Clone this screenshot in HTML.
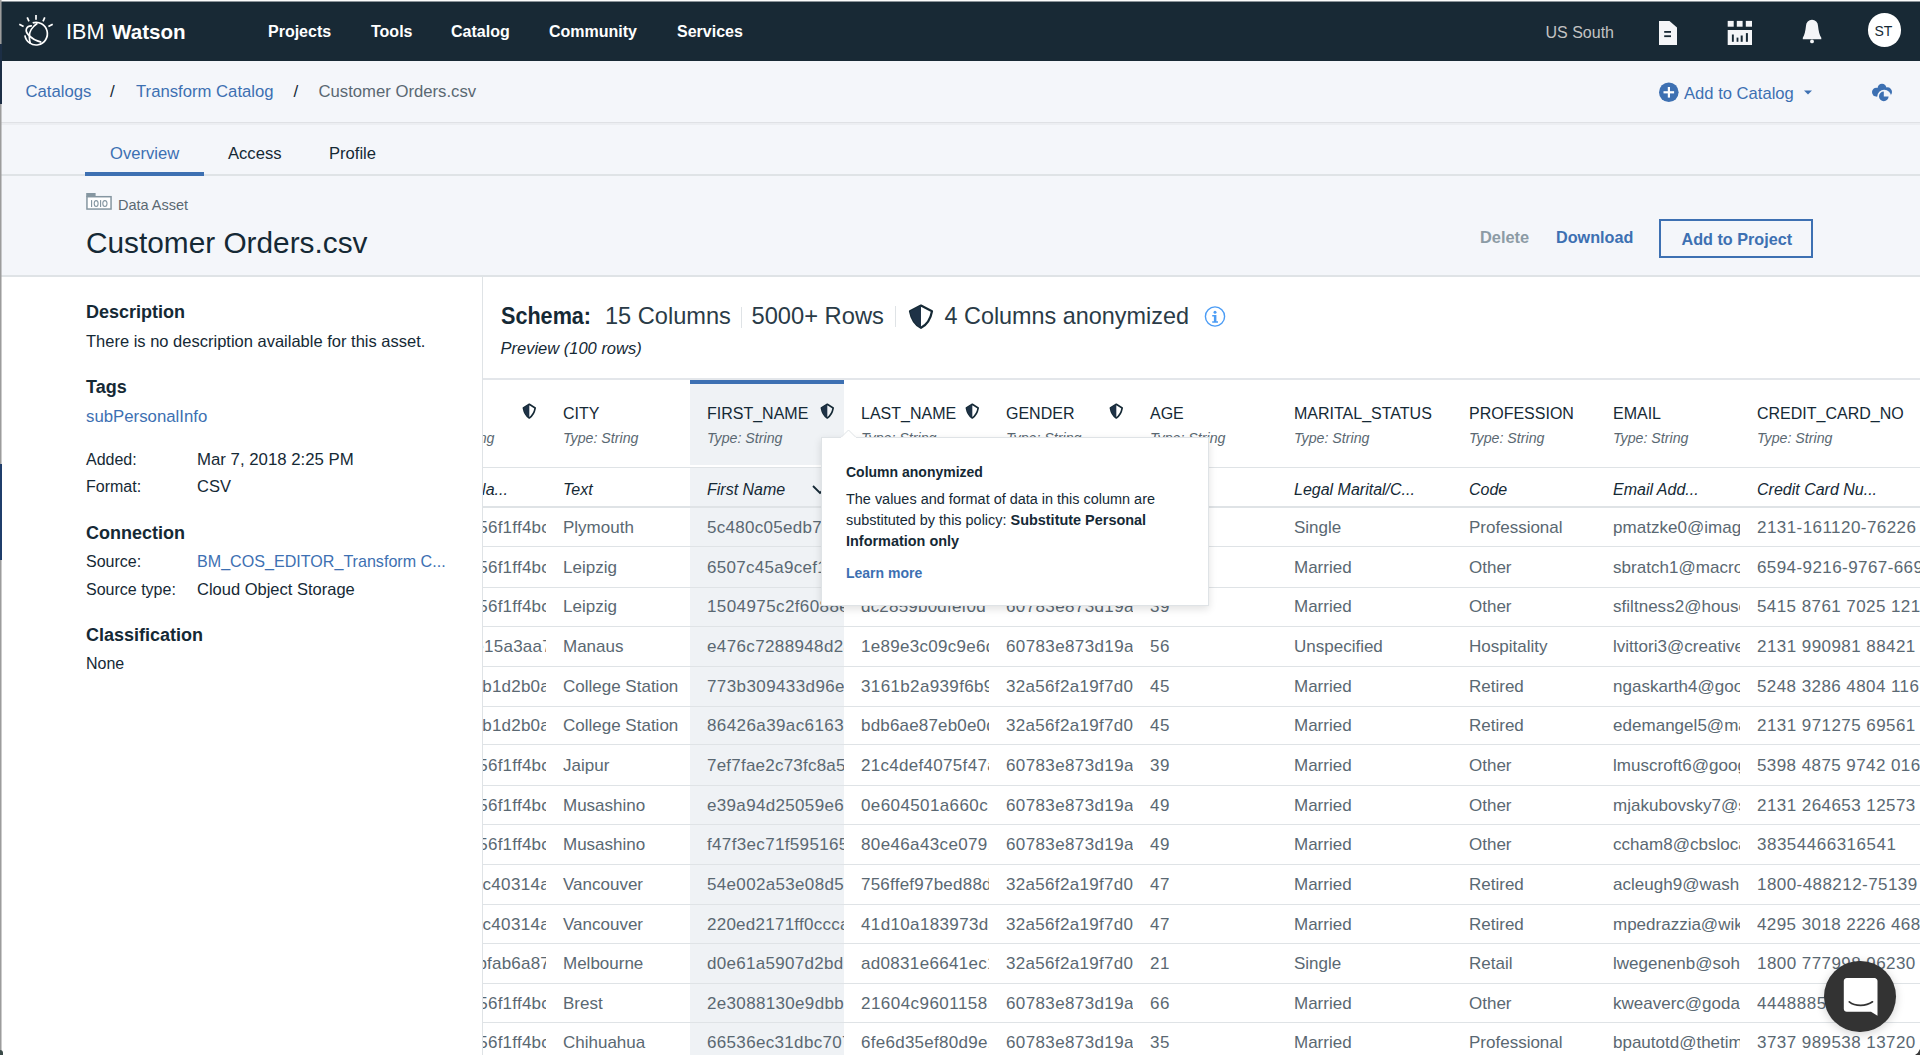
<!DOCTYPE html>
<html><head><meta charset="utf-8">
<style>
*{margin:0;padding:0;box-sizing:border-box}
html,body{width:1920px;height:1055px;overflow:hidden;background:#fff;font-family:"Liberation Sans",sans-serif;color:#152935}
.a{position:absolute;white-space:nowrap;line-height:1}
b{font-weight:bold}
</style></head><body>
<div style="position:absolute;left:0;top:0;width:1920px;height:61px;background:#182935"></div>
<svg style="position:absolute;left:15px;top:12px" width="42" height="36" viewBox="0 0 42 36">
<g stroke="#fff" stroke-width="1.7" fill="none" stroke-linecap="butt">
<line x1="21" y1="3" x2="21" y2="7.8"/>
<line x1="12.2" y1="5.3" x2="14" y2="9.4"/>
<line x1="29.8" y1="5.3" x2="28" y2="9.4"/>
<line x1="4.3" y1="12.2" x2="8.6" y2="14.6"/>
<line x1="37.7" y1="12.2" x2="33.4" y2="14.6"/>
<path d="M17.7 10.9 A11.3 11.3 0 1 1 9.9 23.3"/>
<path d="M16.9 13.9 C11.5 13.6 9.3 18.3 13.2 22.6 C16.5 26.3 21.5 29 26.3 30.1"/>
<path d="M22.4 11.2 C17.5 14.5 13.8 20 14.3 25 C14.5 28 15 30 15.3 31.6"/>
</g></svg>
<div class="a " style="left:66.0px;top:21.0px;font-size:21.6px;color:#fff">IBM</div>
<div class="a " style="left:112.0px;top:22.0px;font-size:20.6px;color:#fff;font-weight:bold">Watson</div>
<div class="a " style="left:268.0px;top:24.0px;font-size:16px;color:#fff;font-weight:bold">Projects</div>
<div class="a " style="left:371.0px;top:24.0px;font-size:16px;color:#fff;font-weight:bold">Tools</div>
<div class="a " style="left:451.0px;top:24.0px;font-size:16px;color:#fff;font-weight:bold">Catalog</div>
<div class="a " style="left:549.0px;top:24.0px;font-size:16px;color:#fff;font-weight:bold">Community</div>
<div class="a " style="left:677.0px;top:24.0px;font-size:16px;color:#fff;font-weight:bold">Services</div>
<div class="a " style="left:1545.5px;top:25.0px;font-size:16px;color:#c2c3c3">US South</div>
<svg style="position:absolute;left:1658px;top:20px" width="20" height="26" viewBox="0 0 20 26">
<path d="M1 1 H11.5 L19 7.6 V25 H1 Z" fill="#f4f5f8"/>
<rect x="6.2" y="11" width="6.8" height="1.8" fill="#182935"/>
<rect x="6.2" y="15.3" width="6.8" height="1.8" fill="#182935"/>
</svg>
<svg style="position:absolute;left:1727px;top:20px" width="26" height="26" viewBox="0 0 26 26">
<rect x="0.7" y="0.9" width="6" height="5.8" fill="#f4f5f8"/>
<rect x="9.8" y="0.9" width="5.8" height="5.8" fill="#f4f5f8"/>
<rect x="18.8" y="0.9" width="6.2" height="5.8" fill="#f4f5f8"/>
<rect x="0.7" y="10" width="24.3" height="15" fill="#f4f5f8"/>
<rect x="4.9" y="14.5" width="1.9" height="7.3" fill="#182935"/>
<rect x="9.6" y="17.6" width="1.8" height="4.2" fill="#182935"/>
<rect x="13.7" y="15.5" width="2" height="6.3" fill="#182935"/>
<rect x="18.9" y="13.1" width="2" height="8.7" fill="#182935"/>
</svg>
<svg style="position:absolute;left:1802px;top:19px" width="20" height="25" viewBox="0 0 20 25">
<path d="M4 6.8 A6 6 0 0 1 16 6.8 C16.6 12 17.4 16.4 19.3 18.8 V20.2 H0.8 V18.8 C2.6 16.4 3.4 12 4 6.8 Z" fill="#f4f5f8"/>
<circle cx="10" cy="22.4" r="1.9" fill="#f4f5f8"/>
</svg>
<div style="position:absolute;left:1867.5px;top:13.2px;width:33.4px;height:33.4px;border-radius:50%;background:#fff"></div>
<div class="a " style="left:1874.5px;top:24.0px;font-size:14px;color:#152935">ST</div>
<div style="position:absolute;left:0;top:61px;width:1920px;height:214px;background:#f4f6fa"></div>
<div style="position:absolute;left:0;top:122px;width:1920px;height:1px;background:#dfe1e5"></div>
<div style="position:absolute;left:0;top:123px;width:1920px;height:2px;background:#eceef2"></div>
<div style="position:absolute;left:0;top:174px;width:1920px;height:2px;background:#dfe3e6"></div>
<div style="position:absolute;left:0;top:275px;width:1920px;height:2px;background:#dfe3e6"></div>
<div class="a " style="left:25.5px;top:84.0px;font-size:16.7px;color:#3d70b2">Catalogs</div>
<div class="a " style="left:110.0px;top:83.0px;font-size:17px;color:#152935">/</div>
<div class="a " style="left:136.0px;top:84.0px;font-size:16.7px;color:#3d70b2">Transform Catalog</div>
<div class="a " style="left:293.5px;top:83.0px;font-size:17px;color:#152935">/</div>
<div class="a " style="left:318.5px;top:84.0px;font-size:16.7px;color:#5a6872">Customer Orders.csv</div>
<svg style="position:absolute;left:1658px;top:82px" width="22" height="22" viewBox="0 0 22 22">
<circle cx="10.8" cy="10.3" r="9.8" fill="#3d70b2"/>
<rect x="9.8" y="5" width="2.2" height="10.6" fill="#fff"/>
<rect x="5.5" y="9.2" width="10.6" height="2.2" fill="#fff"/>
</svg>
<div class="a " style="left:1684.0px;top:86.0px;font-size:16.6px;color:#3d70b2">Add to Catalog</div>
<svg style="position:absolute;left:1803px;top:89px" width="10" height="7" viewBox="0 0 10 7">
<path d="M1 1.5 H9 L5 5.5 Z" fill="#3d70b2"/></svg>
<svg style="position:absolute;left:1866px;top:78px" width="32" height="28" viewBox="0 0 32 28">
<circle cx="10.4" cy="14.1" r="4.4" fill="#3d70b2"/>
<circle cx="16" cy="10.1" r="4.4" fill="#3d70b2"/>
<circle cx="21.4" cy="13.9" r="4.6" fill="#3d70b2"/>
<rect x="10.4" y="10.5" width="11" height="8" fill="#3d70b2"/>
<circle cx="18.2" cy="18.6" r="6.9" fill="#f4f6fa"/>
<path d="M17.8 18.4 V13.6 A4.8 4.8 0 1 0 22.6 18.4 Z" fill="#3d70b2"/>
</svg>
<div class="a " style="left:110.0px;top:146.0px;font-size:16.6px;color:#3d70b2">Overview</div>
<div class="a " style="left:228.0px;top:146.0px;font-size:16.6px;color:#152935">Access</div>
<div class="a " style="left:329.0px;top:146.0px;font-size:16.6px;color:#152935">Profile</div>
<div style="position:absolute;left:85px;top:172px;width:119px;height:4px;background:#3d70b2"></div>
<svg style="position:absolute;left:82px;top:188px" width="34" height="26" viewBox="0 0 34 26">
<rect x="4.2" y="5" width="9.4" height="3.8" fill="#8596a1"/>
<rect x="4.95" y="8.7" width="24.1" height="12.35" fill="#fff" stroke="#8596a1" stroke-width="1.5"/>
<rect x="9" y="12.1" width="1.15" height="6.9" fill="#8596a1"/>
<ellipse cx="14.15" cy="15.55" rx="1.95" ry="2.95" fill="none" stroke="#8596a1" stroke-width="1.1"/>
<rect x="18" y="12.1" width="1.15" height="6.9" fill="#8596a1"/>
<ellipse cx="22.9" cy="15.55" rx="2.1" ry="2.95" fill="none" stroke="#8596a1" stroke-width="1.1"/>
</svg>
<div class="a " style="left:118.0px;top:198.0px;font-size:14.5px;color:#5a6872">Data Asset</div>
<div class="a " style="left:86.0px;top:228.0px;font-size:29.8px;color:#152935">Customer Orders.csv</div>
<div class="a " style="left:1480.0px;top:229.0px;font-size:16.4px;color:#8c9ba5;font-weight:bold">Delete</div>
<div class="a " style="left:1556.0px;top:229.0px;font-size:16.2px;color:#3d70b2;font-weight:bold">Download</div>
<div style="position:absolute;left:1659px;top:219px;width:154px;height:39px;border:2px solid #3d70b2"></div>
<div class="a " style="left:1681.5px;top:231.0px;font-size:16.2px;color:#3d70b2;font-weight:bold">Add to Project</div>
<div class="a " style="left:86.0px;top:303.0px;font-size:18px;font-weight:bold">Description</div>
<div class="a " style="left:86.0px;top:333.0px;font-size:16.5px;color:#152935">There is no description available for this asset.</div>
<div class="a " style="left:86.0px;top:378.0px;font-size:18px;font-weight:bold">Tags</div>
<div class="a " style="left:86.0px;top:409.0px;font-size:16.8px;color:#3d70b2">subPersonalInfo</div>
<div class="a " style="left:86.0px;top:452.0px;font-size:16px;">Added:</div>
<div class="a " style="left:197.0px;top:452.0px;font-size:16.8px;">Mar 7, 2018 2:25 PM</div>
<div class="a " style="left:86.0px;top:479.0px;font-size:16px;">Format:</div>
<div class="a " style="left:197.0px;top:478.0px;font-size:16.5px;">CSV</div>
<div class="a " style="left:86.0px;top:524.0px;font-size:18px;font-weight:bold">Connection</div>
<div class="a " style="left:86.0px;top:554.0px;font-size:16px;">Source:</div>
<div class="a " style="left:197.0px;top:553.0px;font-size:16.1px;color:#3d70b2">BM_COS_EDITOR_Transform C...</div>
<div class="a " style="left:86.0px;top:582.0px;font-size:16px;">Source type:</div>
<div class="a " style="left:197.0px;top:581.0px;font-size:16.5px;">Cloud Object Storage</div>
<div class="a " style="left:86.0px;top:626.0px;font-size:18px;font-weight:bold">Classification</div>
<div class="a " style="left:86.0px;top:656.0px;font-size:16px;">None</div>
<div style="position:absolute;left:482px;top:277px;width:1px;height:778px;background:#dfe3e6"></div>
<div class="a " style="left:500.5px;top:304.0px;font-size:24px;font-weight:bold;transform:scaleX(0.9);transform-origin:0 0">Schema:</div>
<div class="a " style="left:605.0px;top:305.0px;font-size:23.6px;color:#2a3b47">15 Columns</div>
<div style="position:absolute;left:741px;top:307px;width:1px;height:21px;background:#dfe3e6"></div>
<div class="a " style="left:751.5px;top:305.0px;font-size:23.7px;color:#2a3b47">5000+ Rows</div>
<div style="position:absolute;left:895px;top:306px;width:1px;height:21px;background:#dfe3e6"></div>
<svg style="position:absolute;left:903px;top:300px" width="36" height="34" viewBox="0 0 36 34">
<path d="M18 5.6 L29 11.2 C27.6 19 24 24.6 18 27.8 C12 24.6 8.4 19 7 11.2 Z" fill="none" stroke="#152935" stroke-width="2.2" stroke-linejoin="round"/>
<path d="M18 5.6 L7 11.2 C8.4 19 12 24.6 18 27.8 Z" fill="#1e3246"/>
</svg>
<div class="a " style="left:944.5px;top:305.0px;font-size:23.4px;color:#2a3b47">4 Columns anonymized</div>
<svg style="position:absolute;left:1203px;top:305px" width="24" height="24" viewBox="0 0 24 24">
<circle cx="12" cy="11.5" r="9.6" fill="none" stroke="#4b9cf5" stroke-width="1.4"/>
<circle cx="12" cy="7.3" r="1.5" fill="#4b9cf5"/>
<path d="M9.2 10 H13.4 V16.2 H15 V17.8 H9.2 V16.2 H10.9 V11.6 H9.2 Z" fill="#4b9cf5"/>
</svg>
<div class="a " style="left:500.5px;top:340.0px;font-size:16.5px;font-style:italic">Preview (100 rows)</div>
<div style="position:absolute;left:483px;top:378px;width:1437px;height:2px;background:#e3e6ea"></div>
<div style="position:absolute;left:690px;top:380px;width:154px;height:675px;background:#eff2f5"></div>
<div style="position:absolute;left:690px;top:380px;width:154px;height:4px;background:#3d70b2"></div>
<div style="position:absolute;left:690px;top:465px;width:154px;height:2px;background:#fff"></div>
<div style="position:absolute;left:483px;top:467px;width:1437px;height:1px;background:#dfe3e6"></div>
<div style="position:absolute;left:483px;top:506px;width:1437px;height:2px;background:#dfe3e6"></div>
<div style="position:absolute;left:483px;top:546px;width:1437px;height:1px;background:#dfe3e6"></div>
<div style="position:absolute;left:483px;top:587px;width:1437px;height:1px;background:#dfe3e6"></div>
<div style="position:absolute;left:483px;top:626px;width:1437px;height:1px;background:#dfe3e6"></div>
<div style="position:absolute;left:483px;top:666px;width:1437px;height:1px;background:#dfe3e6"></div>
<div style="position:absolute;left:483px;top:706px;width:1437px;height:1px;background:#dfe3e6"></div>
<div style="position:absolute;left:483px;top:744px;width:1437px;height:1px;background:#dfe3e6"></div>
<div style="position:absolute;left:483px;top:785px;width:1437px;height:1px;background:#dfe3e6"></div>
<div style="position:absolute;left:483px;top:824px;width:1437px;height:1px;background:#dfe3e6"></div>
<div style="position:absolute;left:483px;top:864px;width:1437px;height:1px;background:#dfe3e6"></div>
<div style="position:absolute;left:483px;top:904px;width:1437px;height:1px;background:#dfe3e6"></div>
<div style="position:absolute;left:483px;top:943px;width:1437px;height:1px;background:#dfe3e6"></div>
<div style="position:absolute;left:483px;top:983px;width:1437px;height:1px;background:#dfe3e6"></div>
<div style="position:absolute;left:483px;top:1022px;width:1437px;height:1px;background:#dfe3e6"></div>
<div style="position:absolute;left:483px;top:0;width:1437px;height:1055px;overflow:hidden"><div style="position:absolute;left:-483px;top:0;width:1920px;height:1055px">
<div style="position:absolute;left:402px;top:0;width:144px;height:1055px;overflow:hidden"><div class="a " style="left:17.0px;top:406.0px;font-size:16px;color:#152935">STATE</div>
<div class="a " style="left:17.0px;top:431.0px;font-size:14.2px;color:#5a6872;font-style:italic">Type: String</div>
<div class="a " style="left:17.0px;top:482.0px;font-size:16px;color:#152935;font-style:italic">Region Na...</div>
<svg style="position:absolute;left:120px;top:403px" width="15" height="16" viewBox="0 0 15 16">
<path d="M7.3 1.3 L13.2 5 C12.4 9.5 10.4 12.9 7.3 15 C4.2 12.9 2.2 9.5 1.4 5 Z" fill="none" stroke="#152935" stroke-width="1.6" stroke-linejoin="round"/>
<path d="M7.3 1.3 L1.4 5 C2.2 9.5 4.2 12.9 7.3 15 Z" fill="#1e3246"/></svg></div>
<div style="position:absolute;left:546px;top:0;width:144px;height:1055px;overflow:hidden"><div class="a " style="left:17.0px;top:406.0px;font-size:16px;color:#152935">CITY</div>
<div class="a " style="left:17.0px;top:431.0px;font-size:14.2px;color:#5a6872;font-style:italic">Type: String</div>
<div class="a " style="left:17.0px;top:482.0px;font-size:16px;color:#152935;font-style:italic">Text</div>
</div>
<div style="position:absolute;left:690px;top:0;width:154px;height:1055px;overflow:hidden"><div class="a " style="left:17.0px;top:406.0px;font-size:16px;color:#152935">FIRST_NAME</div>
<div class="a " style="left:17.0px;top:431.0px;font-size:14.2px;color:#5a6872;font-style:italic">Type: String</div>
<div class="a " style="left:17.0px;top:482.0px;font-size:16px;color:#152935;font-style:italic">First Name</div>
<svg style="position:absolute;left:130px;top:403px" width="15" height="16" viewBox="0 0 15 16">
<path d="M7.3 1.3 L13.2 5 C12.4 9.5 10.4 12.9 7.3 15 C4.2 12.9 2.2 9.5 1.4 5 Z" fill="none" stroke="#152935" stroke-width="1.6" stroke-linejoin="round"/>
<path d="M7.3 1.3 L1.4 5 C2.2 9.5 4.2 12.9 7.3 15 Z" fill="#1e3246"/></svg><svg style="position:absolute;left:120px;top:483px" width="20" height="14" viewBox="0 0 20 14"><path d="M3 3 L10 10 L17 3" fill="none" stroke="#152935" stroke-width="1.8"/></svg></div>
<div style="position:absolute;left:844px;top:0;width:145px;height:1055px;overflow:hidden"><div class="a " style="left:17.0px;top:406.0px;font-size:16px;color:#152935">LAST_NAME</div>
<div class="a " style="left:17.0px;top:431.0px;font-size:14.2px;color:#5a6872;font-style:italic">Type: String</div>
<svg style="position:absolute;left:121px;top:403px" width="15" height="16" viewBox="0 0 15 16">
<path d="M7.3 1.3 L13.2 5 C12.4 9.5 10.4 12.9 7.3 15 C4.2 12.9 2.2 9.5 1.4 5 Z" fill="none" stroke="#152935" stroke-width="1.6" stroke-linejoin="round"/>
<path d="M7.3 1.3 L1.4 5 C2.2 9.5 4.2 12.9 7.3 15 Z" fill="#1e3246"/></svg></div>
<div style="position:absolute;left:989px;top:0;width:144px;height:1055px;overflow:hidden"><div class="a " style="left:17.0px;top:406.0px;font-size:16px;color:#152935">GENDER</div>
<div class="a " style="left:17.0px;top:431.0px;font-size:14.2px;color:#5a6872;font-style:italic">Type: String</div>
<svg style="position:absolute;left:120px;top:403px" width="15" height="16" viewBox="0 0 15 16">
<path d="M7.3 1.3 L13.2 5 C12.4 9.5 10.4 12.9 7.3 15 C4.2 12.9 2.2 9.5 1.4 5 Z" fill="none" stroke="#152935" stroke-width="1.6" stroke-linejoin="round"/>
<path d="M7.3 1.3 L1.4 5 C2.2 9.5 4.2 12.9 7.3 15 Z" fill="#1e3246"/></svg></div>
<div style="position:absolute;left:1133px;top:0;width:144px;height:1055px;overflow:hidden"><div class="a " style="left:17.0px;top:406.0px;font-size:16px;color:#152935">AGE</div>
<div class="a " style="left:17.0px;top:431.0px;font-size:14.2px;color:#5a6872;font-style:italic">Type: String</div>
</div>
<div style="position:absolute;left:1277px;top:0;width:175px;height:1055px;overflow:hidden"><div class="a " style="left:17.0px;top:406.0px;font-size:16px;color:#152935">MARITAL_STATUS</div>
<div class="a " style="left:17.0px;top:431.0px;font-size:14.2px;color:#5a6872;font-style:italic">Type: String</div>
<div class="a " style="left:17.0px;top:482.0px;font-size:16px;color:#152935;font-style:italic">Legal Marital/C...</div>
</div>
<div style="position:absolute;left:1452px;top:0;width:144px;height:1055px;overflow:hidden"><div class="a " style="left:17.0px;top:406.0px;font-size:16px;color:#152935">PROFESSION</div>
<div class="a " style="left:17.0px;top:431.0px;font-size:14.2px;color:#5a6872;font-style:italic">Type: String</div>
<div class="a " style="left:17.0px;top:482.0px;font-size:16px;color:#152935;font-style:italic">Code</div>
</div>
<div style="position:absolute;left:1596px;top:0;width:144px;height:1055px;overflow:hidden"><div class="a " style="left:17.0px;top:406.0px;font-size:16px;color:#152935">EMAIL</div>
<div class="a " style="left:17.0px;top:431.0px;font-size:14.2px;color:#5a6872;font-style:italic">Type: String</div>
<div class="a " style="left:17.0px;top:482.0px;font-size:16px;color:#152935;font-style:italic">Email Add...</div>
</div>
<div style="position:absolute;left:1740px;top:0;width:200px;height:1055px;overflow:hidden"><div class="a " style="left:17.0px;top:406.0px;font-size:16px;color:#152935">CREDIT_CARD_NO</div>
<div class="a " style="left:17.0px;top:431.0px;font-size:14.2px;color:#5a6872;font-style:italic">Type: String</div>
<div class="a " style="left:17.0px;top:482.0px;font-size:16px;color:#152935;font-style:italic">Credit Card Nu...</div>
</div>
<div style="position:absolute;left:402px;top:0;width:144px;height:1055px;overflow:hidden"><div class="a" style="right:-4px;top:519.0px;font-size:17px;color:#5a6872;letter-spacing:0.23px">c9b356f1ff4bc</div></div>
<div style="position:absolute;left:546px;top:0;width:144px;height:1055px;overflow:hidden"><div class="a" style="left:17px;top:519.0px;font-size:17px;color:#5a6872;letter-spacing:0.00px">Plymouth</div></div>
<div style="position:absolute;left:690px;top:0;width:154px;height:1055px;overflow:hidden"><div class="a" style="left:17px;top:519.0px;font-size:17px;color:#5a6872;letter-spacing:0.28px">5c480c05edb7a1b2</div></div>
<div style="position:absolute;left:844px;top:0;width:145px;height:1055px;overflow:hidden"><div class="a" style="left:17px;top:519.0px;font-size:17px;color:#5a6872;letter-spacing:0.25px">b7d3e2c1f0a9</div></div>
<div style="position:absolute;left:989px;top:0;width:144px;height:1055px;overflow:hidden"><div class="a" style="left:17px;top:519.0px;font-size:17px;color:#5a6872;letter-spacing:0.38px">60783e873d19a</div></div>
<div style="position:absolute;left:1133px;top:0;width:144px;height:1055px;overflow:hidden"><div class="a" style="left:17px;top:519.0px;font-size:17px;color:#5a6872;letter-spacing:0.50px">39</div></div>
<div style="position:absolute;left:1277px;top:0;width:175px;height:1055px;overflow:hidden"><div class="a" style="left:17px;top:519.0px;font-size:17px;color:#5a6872;letter-spacing:0.00px">Single</div></div>
<div style="position:absolute;left:1452px;top:0;width:144px;height:1055px;overflow:hidden"><div class="a" style="left:17px;top:519.0px;font-size:17px;color:#5a6872;letter-spacing:0.00px">Professional</div></div>
<div style="position:absolute;left:1596px;top:0;width:144px;height:1055px;overflow:hidden"><div class="a" style="left:17px;top:519.0px;font-size:17px;color:#5a6872;letter-spacing:0.03px">pmatzke0@imagelinks</div></div>
<div style="position:absolute;left:1740px;top:0;width:200px;height:1055px;overflow:hidden"><div class="a" style="left:17px;top:519.0px;font-size:17px;color:#5a6872;letter-spacing:0.44px">2131-161120-76226</div></div>
<div style="position:absolute;left:402px;top:0;width:144px;height:1055px;overflow:hidden"><div class="a" style="right:-4px;top:559.0px;font-size:17px;color:#5a6872;letter-spacing:0.23px">c9b356f1ff4bc</div></div>
<div style="position:absolute;left:546px;top:0;width:144px;height:1055px;overflow:hidden"><div class="a" style="left:17px;top:559.0px;font-size:17px;color:#5a6872;letter-spacing:0.00px">Leipzig</div></div>
<div style="position:absolute;left:690px;top:0;width:154px;height:1055px;overflow:hidden"><div class="a" style="left:17px;top:559.0px;font-size:17px;color:#5a6872;letter-spacing:0.28px">6507c45a9cef1d2e</div></div>
<div style="position:absolute;left:844px;top:0;width:145px;height:1055px;overflow:hidden"><div class="a" style="left:17px;top:559.0px;font-size:17px;color:#5a6872;letter-spacing:0.25px">a1b2c3d4e5f6</div></div>
<div style="position:absolute;left:989px;top:0;width:144px;height:1055px;overflow:hidden"><div class="a" style="left:17px;top:559.0px;font-size:17px;color:#5a6872;letter-spacing:0.38px">60783e873d19a</div></div>
<div style="position:absolute;left:1133px;top:0;width:144px;height:1055px;overflow:hidden"><div class="a" style="left:17px;top:559.0px;font-size:17px;color:#5a6872;letter-spacing:0.50px">39</div></div>
<div style="position:absolute;left:1277px;top:0;width:175px;height:1055px;overflow:hidden"><div class="a" style="left:17px;top:559.0px;font-size:17px;color:#5a6872;letter-spacing:0.00px">Married</div></div>
<div style="position:absolute;left:1452px;top:0;width:144px;height:1055px;overflow:hidden"><div class="a" style="left:17px;top:559.0px;font-size:17px;color:#5a6872;letter-spacing:0.00px">Other</div></div>
<div style="position:absolute;left:1596px;top:0;width:144px;height:1055px;overflow:hidden"><div class="a" style="left:17px;top:559.0px;font-size:17px;color:#5a6872;letter-spacing:0.03px">sbratch1@macromedia</div></div>
<div style="position:absolute;left:1740px;top:0;width:200px;height:1055px;overflow:hidden"><div class="a" style="left:17px;top:559.0px;font-size:17px;color:#5a6872;letter-spacing:0.42px">6594-9216-9767-6691</div></div>
<div style="position:absolute;left:402px;top:0;width:144px;height:1055px;overflow:hidden"><div class="a" style="right:-4px;top:598.0px;font-size:17px;color:#5a6872;letter-spacing:0.23px">c9b356f1ff4bc</div></div>
<div style="position:absolute;left:546px;top:0;width:144px;height:1055px;overflow:hidden"><div class="a" style="left:17px;top:598.0px;font-size:17px;color:#5a6872;letter-spacing:0.00px">Leipzig</div></div>
<div style="position:absolute;left:690px;top:0;width:154px;height:1055px;overflow:hidden"><div class="a" style="left:17px;top:598.0px;font-size:17px;color:#5a6872;letter-spacing:0.40px">1504975c2f6088e</div></div>
<div style="position:absolute;left:844px;top:0;width:145px;height:1055px;overflow:hidden"><div class="a" style="left:17px;top:598.0px;font-size:17px;color:#5a6872;letter-spacing:0.21px">dc2859b0dfef0d</div></div>
<div style="position:absolute;left:989px;top:0;width:144px;height:1055px;overflow:hidden"><div class="a" style="left:17px;top:598.0px;font-size:17px;color:#5a6872;letter-spacing:0.38px">60783e873d19a</div></div>
<div style="position:absolute;left:1133px;top:0;width:144px;height:1055px;overflow:hidden"><div class="a" style="left:17px;top:598.0px;font-size:17px;color:#5a6872;letter-spacing:0.50px">39</div></div>
<div style="position:absolute;left:1277px;top:0;width:175px;height:1055px;overflow:hidden"><div class="a" style="left:17px;top:598.0px;font-size:17px;color:#5a6872;letter-spacing:0.00px">Married</div></div>
<div style="position:absolute;left:1452px;top:0;width:144px;height:1055px;overflow:hidden"><div class="a" style="left:17px;top:598.0px;font-size:17px;color:#5a6872;letter-spacing:0.00px">Other</div></div>
<div style="position:absolute;left:1596px;top:0;width:144px;height:1055px;overflow:hidden"><div class="a" style="left:17px;top:598.0px;font-size:17px;color:#5a6872;letter-spacing:0.03px">sfiltness2@house.gov</div></div>
<div style="position:absolute;left:1740px;top:0;width:200px;height:1055px;overflow:hidden"><div class="a" style="left:17px;top:598.0px;font-size:17px;color:#5a6872;letter-spacing:0.42px">5415 8761 7025 1213</div></div>
<div style="position:absolute;left:402px;top:0;width:144px;height:1055px;overflow:hidden"><div class="a" style="right:-6px;top:638.0px;font-size:17px;color:#5a6872;letter-spacing:0.25px">a98de15a3aa7</div></div>
<div style="position:absolute;left:546px;top:0;width:144px;height:1055px;overflow:hidden"><div class="a" style="left:17px;top:638.0px;font-size:17px;color:#5a6872;letter-spacing:0.00px">Manaus</div></div>
<div style="position:absolute;left:690px;top:0;width:154px;height:1055px;overflow:hidden"><div class="a" style="left:17px;top:638.0px;font-size:17px;color:#5a6872;letter-spacing:0.37px">e476c7288948d2a</div></div>
<div style="position:absolute;left:844px;top:0;width:145px;height:1055px;overflow:hidden"><div class="a" style="left:17px;top:638.0px;font-size:17px;color:#5a6872;letter-spacing:0.29px">1e89e3c09c9e6d</div></div>
<div style="position:absolute;left:989px;top:0;width:144px;height:1055px;overflow:hidden"><div class="a" style="left:17px;top:638.0px;font-size:17px;color:#5a6872;letter-spacing:0.38px">60783e873d19a</div></div>
<div style="position:absolute;left:1133px;top:0;width:144px;height:1055px;overflow:hidden"><div class="a" style="left:17px;top:638.0px;font-size:17px;color:#5a6872;letter-spacing:0.50px">56</div></div>
<div style="position:absolute;left:1277px;top:0;width:175px;height:1055px;overflow:hidden"><div class="a" style="left:17px;top:638.0px;font-size:17px;color:#5a6872;letter-spacing:0.00px">Unspecified</div></div>
<div style="position:absolute;left:1452px;top:0;width:144px;height:1055px;overflow:hidden"><div class="a" style="left:17px;top:638.0px;font-size:17px;color:#5a6872;letter-spacing:0.00px">Hospitality</div></div>
<div style="position:absolute;left:1596px;top:0;width:144px;height:1055px;overflow:hidden"><div class="a" style="left:17px;top:638.0px;font-size:17px;color:#5a6872;letter-spacing:0.02px">lvittori3@creativecommons</div></div>
<div style="position:absolute;left:1740px;top:0;width:200px;height:1055px;overflow:hidden"><div class="a" style="left:17px;top:638.0px;font-size:17px;color:#5a6872;letter-spacing:0.44px">2131 990981 88421</div></div>
<div style="position:absolute;left:402px;top:0;width:144px;height:1055px;overflow:hidden"><div class="a" style="right:-4px;top:678.0px;font-size:17px;color:#5a6872;letter-spacing:0.23px">f7e8b1d2b0a</div></div>
<div style="position:absolute;left:546px;top:0;width:144px;height:1055px;overflow:hidden"><div class="a" style="left:17px;top:678.0px;font-size:17px;color:#5a6872;letter-spacing:0.00px">College Station</div></div>
<div style="position:absolute;left:690px;top:0;width:154px;height:1055px;overflow:hidden"><div class="a" style="left:17px;top:678.0px;font-size:17px;color:#5a6872;letter-spacing:0.40px">773b309433d96e1</div></div>
<div style="position:absolute;left:844px;top:0;width:145px;height:1055px;overflow:hidden"><div class="a" style="left:17px;top:678.0px;font-size:17px;color:#5a6872;letter-spacing:0.36px">3161b2a939f6b9</div></div>
<div style="position:absolute;left:989px;top:0;width:144px;height:1055px;overflow:hidden"><div class="a" style="left:17px;top:678.0px;font-size:17px;color:#5a6872;letter-spacing:0.32px">32a56f2a19f7d0</div></div>
<div style="position:absolute;left:1133px;top:0;width:144px;height:1055px;overflow:hidden"><div class="a" style="left:17px;top:678.0px;font-size:17px;color:#5a6872;letter-spacing:0.50px">45</div></div>
<div style="position:absolute;left:1277px;top:0;width:175px;height:1055px;overflow:hidden"><div class="a" style="left:17px;top:678.0px;font-size:17px;color:#5a6872;letter-spacing:0.00px">Married</div></div>
<div style="position:absolute;left:1452px;top:0;width:144px;height:1055px;overflow:hidden"><div class="a" style="left:17px;top:678.0px;font-size:17px;color:#5a6872;letter-spacing:0.00px">Retired</div></div>
<div style="position:absolute;left:1596px;top:0;width:144px;height:1055px;overflow:hidden"><div class="a" style="left:17px;top:678.0px;font-size:17px;color:#5a6872;letter-spacing:0.03px">ngaskarth4@google</div></div>
<div style="position:absolute;left:1740px;top:0;width:200px;height:1055px;overflow:hidden"><div class="a" style="left:17px;top:678.0px;font-size:17px;color:#5a6872;letter-spacing:0.42px">5248 3286 4804 1161</div></div>
<div style="position:absolute;left:402px;top:0;width:144px;height:1055px;overflow:hidden"><div class="a" style="right:-4px;top:717.0px;font-size:17px;color:#5a6872;letter-spacing:0.23px">f7e8b1d2b0a</div></div>
<div style="position:absolute;left:546px;top:0;width:144px;height:1055px;overflow:hidden"><div class="a" style="left:17px;top:717.0px;font-size:17px;color:#5a6872;letter-spacing:0.00px">College Station</div></div>
<div style="position:absolute;left:690px;top:0;width:154px;height:1055px;overflow:hidden"><div class="a" style="left:17px;top:717.0px;font-size:17px;color:#5a6872;letter-spacing:0.40px">86426a39ac61632</div></div>
<div style="position:absolute;left:844px;top:0;width:145px;height:1055px;overflow:hidden"><div class="a" style="left:17px;top:717.0px;font-size:17px;color:#5a6872;letter-spacing:0.18px">bdb6ae87eb0e0d</div></div>
<div style="position:absolute;left:989px;top:0;width:144px;height:1055px;overflow:hidden"><div class="a" style="left:17px;top:717.0px;font-size:17px;color:#5a6872;letter-spacing:0.32px">32a56f2a19f7d0</div></div>
<div style="position:absolute;left:1133px;top:0;width:144px;height:1055px;overflow:hidden"><div class="a" style="left:17px;top:717.0px;font-size:17px;color:#5a6872;letter-spacing:0.50px">45</div></div>
<div style="position:absolute;left:1277px;top:0;width:175px;height:1055px;overflow:hidden"><div class="a" style="left:17px;top:717.0px;font-size:17px;color:#5a6872;letter-spacing:0.00px">Married</div></div>
<div style="position:absolute;left:1452px;top:0;width:144px;height:1055px;overflow:hidden"><div class="a" style="left:17px;top:717.0px;font-size:17px;color:#5a6872;letter-spacing:0.00px">Retired</div></div>
<div style="position:absolute;left:1596px;top:0;width:144px;height:1055px;overflow:hidden"><div class="a" style="left:17px;top:717.0px;font-size:17px;color:#5a6872;letter-spacing:0.03px">edemangel5@mail</div></div>
<div style="position:absolute;left:1740px;top:0;width:200px;height:1055px;overflow:hidden"><div class="a" style="left:17px;top:717.0px;font-size:17px;color:#5a6872;letter-spacing:0.44px">2131 971275 69561</div></div>
<div style="position:absolute;left:402px;top:0;width:144px;height:1055px;overflow:hidden"><div class="a" style="right:-4px;top:757.0px;font-size:17px;color:#5a6872;letter-spacing:0.23px">c9b356f1ff4bc</div></div>
<div style="position:absolute;left:546px;top:0;width:144px;height:1055px;overflow:hidden"><div class="a" style="left:17px;top:757.0px;font-size:17px;color:#5a6872;letter-spacing:0.00px">Jaipur</div></div>
<div style="position:absolute;left:690px;top:0;width:154px;height:1055px;overflow:hidden"><div class="a" style="left:17px;top:757.0px;font-size:17px;color:#5a6872;letter-spacing:0.22px">7ef7fae2c73fc8a5</div></div>
<div style="position:absolute;left:844px;top:0;width:145px;height:1055px;overflow:hidden"><div class="a" style="left:17px;top:757.0px;font-size:17px;color:#5a6872;letter-spacing:0.30px">21c4def4075f47a</div></div>
<div style="position:absolute;left:989px;top:0;width:144px;height:1055px;overflow:hidden"><div class="a" style="left:17px;top:757.0px;font-size:17px;color:#5a6872;letter-spacing:0.38px">60783e873d19a</div></div>
<div style="position:absolute;left:1133px;top:0;width:144px;height:1055px;overflow:hidden"><div class="a" style="left:17px;top:757.0px;font-size:17px;color:#5a6872;letter-spacing:0.50px">39</div></div>
<div style="position:absolute;left:1277px;top:0;width:175px;height:1055px;overflow:hidden"><div class="a" style="left:17px;top:757.0px;font-size:17px;color:#5a6872;letter-spacing:0.00px">Married</div></div>
<div style="position:absolute;left:1452px;top:0;width:144px;height:1055px;overflow:hidden"><div class="a" style="left:17px;top:757.0px;font-size:17px;color:#5a6872;letter-spacing:0.00px">Other</div></div>
<div style="position:absolute;left:1596px;top:0;width:144px;height:1055px;overflow:hidden"><div class="a" style="left:17px;top:757.0px;font-size:17px;color:#5a6872;letter-spacing:0.03px">lmuscroft6@google</div></div>
<div style="position:absolute;left:1740px;top:0;width:200px;height:1055px;overflow:hidden"><div class="a" style="left:17px;top:757.0px;font-size:17px;color:#5a6872;letter-spacing:0.42px">5398 4875 9742 0161</div></div>
<div style="position:absolute;left:402px;top:0;width:144px;height:1055px;overflow:hidden"><div class="a" style="right:-4px;top:797.0px;font-size:17px;color:#5a6872;letter-spacing:0.23px">c9b356f1ff4bc</div></div>
<div style="position:absolute;left:546px;top:0;width:144px;height:1055px;overflow:hidden"><div class="a" style="left:17px;top:797.0px;font-size:17px;color:#5a6872;letter-spacing:0.00px">Musashino</div></div>
<div style="position:absolute;left:690px;top:0;width:154px;height:1055px;overflow:hidden"><div class="a" style="left:17px;top:797.0px;font-size:17px;color:#5a6872;letter-spacing:0.33px">e39a94d25059e6a</div></div>
<div style="position:absolute;left:844px;top:0;width:145px;height:1055px;overflow:hidden"><div class="a" style="left:17px;top:797.0px;font-size:17px;color:#5a6872;letter-spacing:0.39px">0e604501a660c1</div></div>
<div style="position:absolute;left:989px;top:0;width:144px;height:1055px;overflow:hidden"><div class="a" style="left:17px;top:797.0px;font-size:17px;color:#5a6872;letter-spacing:0.38px">60783e873d19a</div></div>
<div style="position:absolute;left:1133px;top:0;width:144px;height:1055px;overflow:hidden"><div class="a" style="left:17px;top:797.0px;font-size:17px;color:#5a6872;letter-spacing:0.50px">49</div></div>
<div style="position:absolute;left:1277px;top:0;width:175px;height:1055px;overflow:hidden"><div class="a" style="left:17px;top:797.0px;font-size:17px;color:#5a6872;letter-spacing:0.00px">Married</div></div>
<div style="position:absolute;left:1452px;top:0;width:144px;height:1055px;overflow:hidden"><div class="a" style="left:17px;top:797.0px;font-size:17px;color:#5a6872;letter-spacing:0.00px">Other</div></div>
<div style="position:absolute;left:1596px;top:0;width:144px;height:1055px;overflow:hidden"><div class="a" style="left:17px;top:797.0px;font-size:17px;color:#5a6872;letter-spacing:0.03px">mjakubovsky7@sina</div></div>
<div style="position:absolute;left:1740px;top:0;width:200px;height:1055px;overflow:hidden"><div class="a" style="left:17px;top:797.0px;font-size:17px;color:#5a6872;letter-spacing:0.44px">2131 264653 12573</div></div>
<div style="position:absolute;left:402px;top:0;width:144px;height:1055px;overflow:hidden"><div class="a" style="right:-4px;top:836.0px;font-size:17px;color:#5a6872;letter-spacing:0.23px">c9b356f1ff4bc</div></div>
<div style="position:absolute;left:546px;top:0;width:144px;height:1055px;overflow:hidden"><div class="a" style="left:17px;top:836.0px;font-size:17px;color:#5a6872;letter-spacing:0.00px">Musashino</div></div>
<div style="position:absolute;left:690px;top:0;width:154px;height:1055px;overflow:hidden"><div class="a" style="left:17px;top:836.0px;font-size:17px;color:#5a6872;letter-spacing:0.34px">f47f3ec71f595165</div></div>
<div style="position:absolute;left:844px;top:0;width:145px;height:1055px;overflow:hidden"><div class="a" style="left:17px;top:836.0px;font-size:17px;color:#5a6872;letter-spacing:0.36px">80e46a43ce0791</div></div>
<div style="position:absolute;left:989px;top:0;width:144px;height:1055px;overflow:hidden"><div class="a" style="left:17px;top:836.0px;font-size:17px;color:#5a6872;letter-spacing:0.38px">60783e873d19a</div></div>
<div style="position:absolute;left:1133px;top:0;width:144px;height:1055px;overflow:hidden"><div class="a" style="left:17px;top:836.0px;font-size:17px;color:#5a6872;letter-spacing:0.50px">49</div></div>
<div style="position:absolute;left:1277px;top:0;width:175px;height:1055px;overflow:hidden"><div class="a" style="left:17px;top:836.0px;font-size:17px;color:#5a6872;letter-spacing:0.00px">Married</div></div>
<div style="position:absolute;left:1452px;top:0;width:144px;height:1055px;overflow:hidden"><div class="a" style="left:17px;top:836.0px;font-size:17px;color:#5a6872;letter-spacing:0.00px">Other</div></div>
<div style="position:absolute;left:1596px;top:0;width:144px;height:1055px;overflow:hidden"><div class="a" style="left:17px;top:836.0px;font-size:17px;color:#5a6872;letter-spacing:0.03px">ccham8@cbslocal</div></div>
<div style="position:absolute;left:1740px;top:0;width:200px;height:1055px;overflow:hidden"><div class="a" style="left:17px;top:836.0px;font-size:17px;color:#5a6872;letter-spacing:0.50px">38354466316541</div></div>
<div style="position:absolute;left:402px;top:0;width:144px;height:1055px;overflow:hidden"><div class="a" style="right:-4px;top:876.0px;font-size:17px;color:#5a6872;letter-spacing:0.32px">d2a5c40314a</div></div>
<div style="position:absolute;left:546px;top:0;width:144px;height:1055px;overflow:hidden"><div class="a" style="left:17px;top:876.0px;font-size:17px;color:#5a6872;letter-spacing:0.00px">Vancouver</div></div>
<div style="position:absolute;left:690px;top:0;width:154px;height:1055px;overflow:hidden"><div class="a" style="left:17px;top:876.0px;font-size:17px;color:#5a6872;letter-spacing:0.33px">54e002a53e08d5a</div></div>
<div style="position:absolute;left:844px;top:0;width:145px;height:1055px;overflow:hidden"><div class="a" style="left:17px;top:876.0px;font-size:17px;color:#5a6872;letter-spacing:0.23px">756ffef97bed88d</div></div>
<div style="position:absolute;left:989px;top:0;width:144px;height:1055px;overflow:hidden"><div class="a" style="left:17px;top:876.0px;font-size:17px;color:#5a6872;letter-spacing:0.32px">32a56f2a19f7d0</div></div>
<div style="position:absolute;left:1133px;top:0;width:144px;height:1055px;overflow:hidden"><div class="a" style="left:17px;top:876.0px;font-size:17px;color:#5a6872;letter-spacing:0.50px">47</div></div>
<div style="position:absolute;left:1277px;top:0;width:175px;height:1055px;overflow:hidden"><div class="a" style="left:17px;top:876.0px;font-size:17px;color:#5a6872;letter-spacing:0.00px">Married</div></div>
<div style="position:absolute;left:1452px;top:0;width:144px;height:1055px;overflow:hidden"><div class="a" style="left:17px;top:876.0px;font-size:17px;color:#5a6872;letter-spacing:0.00px">Retired</div></div>
<div style="position:absolute;left:1596px;top:0;width:144px;height:1055px;overflow:hidden"><div class="a" style="left:17px;top:876.0px;font-size:17px;color:#5a6872;letter-spacing:0.03px">acleugh9@washington</div></div>
<div style="position:absolute;left:1740px;top:0;width:200px;height:1055px;overflow:hidden"><div class="a" style="left:17px;top:876.0px;font-size:17px;color:#5a6872;letter-spacing:0.44px">1800-488212-75139</div></div>
<div style="position:absolute;left:402px;top:0;width:144px;height:1055px;overflow:hidden"><div class="a" style="right:-4px;top:916.0px;font-size:17px;color:#5a6872;letter-spacing:0.32px">d2a5c40314a</div></div>
<div style="position:absolute;left:546px;top:0;width:144px;height:1055px;overflow:hidden"><div class="a" style="left:17px;top:916.0px;font-size:17px;color:#5a6872;letter-spacing:0.00px">Vancouver</div></div>
<div style="position:absolute;left:690px;top:0;width:154px;height:1055px;overflow:hidden"><div class="a" style="left:17px;top:916.0px;font-size:17px;color:#5a6872;letter-spacing:0.25px">220ed2171ff0ccca</div></div>
<div style="position:absolute;left:844px;top:0;width:145px;height:1055px;overflow:hidden"><div class="a" style="left:17px;top:916.0px;font-size:17px;color:#5a6872;letter-spacing:0.36px">41d10a183973da</div></div>
<div style="position:absolute;left:989px;top:0;width:144px;height:1055px;overflow:hidden"><div class="a" style="left:17px;top:916.0px;font-size:17px;color:#5a6872;letter-spacing:0.32px">32a56f2a19f7d0</div></div>
<div style="position:absolute;left:1133px;top:0;width:144px;height:1055px;overflow:hidden"><div class="a" style="left:17px;top:916.0px;font-size:17px;color:#5a6872;letter-spacing:0.50px">47</div></div>
<div style="position:absolute;left:1277px;top:0;width:175px;height:1055px;overflow:hidden"><div class="a" style="left:17px;top:916.0px;font-size:17px;color:#5a6872;letter-spacing:0.00px">Married</div></div>
<div style="position:absolute;left:1452px;top:0;width:144px;height:1055px;overflow:hidden"><div class="a" style="left:17px;top:916.0px;font-size:17px;color:#5a6872;letter-spacing:0.00px">Retired</div></div>
<div style="position:absolute;left:1596px;top:0;width:144px;height:1055px;overflow:hidden"><div class="a" style="left:17px;top:916.0px;font-size:17px;color:#5a6872;letter-spacing:0.00px">mpedrazzia@wiki</div></div>
<div style="position:absolute;left:1740px;top:0;width:200px;height:1055px;overflow:hidden"><div class="a" style="left:17px;top:916.0px;font-size:17px;color:#5a6872;letter-spacing:0.42px">4295 3018 2226 4681</div></div>
<div style="position:absolute;left:402px;top:0;width:144px;height:1055px;overflow:hidden"><div class="a" style="right:-4px;top:955.0px;font-size:17px;color:#5a6872;letter-spacing:0.21px">e6c1bfab6a87</div></div>
<div style="position:absolute;left:546px;top:0;width:144px;height:1055px;overflow:hidden"><div class="a" style="left:17px;top:955.0px;font-size:17px;color:#5a6872;letter-spacing:0.00px">Melbourne</div></div>
<div style="position:absolute;left:690px;top:0;width:154px;height:1055px;overflow:hidden"><div class="a" style="left:17px;top:955.0px;font-size:17px;color:#5a6872;letter-spacing:0.30px">d0e61a5907d2bd1</div></div>
<div style="position:absolute;left:844px;top:0;width:145px;height:1055px;overflow:hidden"><div class="a" style="left:17px;top:955.0px;font-size:17px;color:#5a6872;letter-spacing:0.32px">ad0831e6641ec1</div></div>
<div style="position:absolute;left:989px;top:0;width:144px;height:1055px;overflow:hidden"><div class="a" style="left:17px;top:955.0px;font-size:17px;color:#5a6872;letter-spacing:0.32px">32a56f2a19f7d0</div></div>
<div style="position:absolute;left:1133px;top:0;width:144px;height:1055px;overflow:hidden"><div class="a" style="left:17px;top:955.0px;font-size:17px;color:#5a6872;letter-spacing:0.50px">21</div></div>
<div style="position:absolute;left:1277px;top:0;width:175px;height:1055px;overflow:hidden"><div class="a" style="left:17px;top:955.0px;font-size:17px;color:#5a6872;letter-spacing:0.00px">Single</div></div>
<div style="position:absolute;left:1452px;top:0;width:144px;height:1055px;overflow:hidden"><div class="a" style="left:17px;top:955.0px;font-size:17px;color:#5a6872;letter-spacing:0.00px">Retail</div></div>
<div style="position:absolute;left:1596px;top:0;width:144px;height:1055px;overflow:hidden"><div class="a" style="left:17px;top:955.0px;font-size:17px;color:#5a6872;letter-spacing:0.00px">lwegenenb@sohu</div></div>
<div style="position:absolute;left:1740px;top:0;width:200px;height:1055px;overflow:hidden"><div class="a" style="left:17px;top:955.0px;font-size:17px;color:#5a6872;letter-spacing:0.44px">1800 777998 96230</div></div>
<div style="position:absolute;left:402px;top:0;width:144px;height:1055px;overflow:hidden"><div class="a" style="right:-4px;top:995.0px;font-size:17px;color:#5a6872;letter-spacing:0.23px">c9b356f1ff4bc</div></div>
<div style="position:absolute;left:546px;top:0;width:144px;height:1055px;overflow:hidden"><div class="a" style="left:17px;top:995.0px;font-size:17px;color:#5a6872;letter-spacing:0.00px">Brest</div></div>
<div style="position:absolute;left:690px;top:0;width:154px;height:1055px;overflow:hidden"><div class="a" style="left:17px;top:995.0px;font-size:17px;color:#5a6872;letter-spacing:0.33px">2e3088130e9dbb2</div></div>
<div style="position:absolute;left:844px;top:0;width:145px;height:1055px;overflow:hidden"><div class="a" style="left:17px;top:995.0px;font-size:17px;color:#5a6872;letter-spacing:0.46px">21604c96011581</div></div>
<div style="position:absolute;left:989px;top:0;width:144px;height:1055px;overflow:hidden"><div class="a" style="left:17px;top:995.0px;font-size:17px;color:#5a6872;letter-spacing:0.38px">60783e873d19a</div></div>
<div style="position:absolute;left:1133px;top:0;width:144px;height:1055px;overflow:hidden"><div class="a" style="left:17px;top:995.0px;font-size:17px;color:#5a6872;letter-spacing:0.50px">66</div></div>
<div style="position:absolute;left:1277px;top:0;width:175px;height:1055px;overflow:hidden"><div class="a" style="left:17px;top:995.0px;font-size:17px;color:#5a6872;letter-spacing:0.00px">Married</div></div>
<div style="position:absolute;left:1452px;top:0;width:144px;height:1055px;overflow:hidden"><div class="a" style="left:17px;top:995.0px;font-size:17px;color:#5a6872;letter-spacing:0.00px">Other</div></div>
<div style="position:absolute;left:1596px;top:0;width:144px;height:1055px;overflow:hidden"><div class="a" style="left:17px;top:995.0px;font-size:17px;color:#5a6872;letter-spacing:0.00px">kweaverc@godaddy</div></div>
<div style="position:absolute;left:1740px;top:0;width:200px;height:1055px;overflow:hidden"><div class="a" style="left:17px;top:995.0px;font-size:17px;color:#5a6872;letter-spacing:0.50px">44488851234</div></div>
<div style="position:absolute;left:402px;top:0;width:144px;height:1055px;overflow:hidden"><div class="a" style="right:-4px;top:1034.0px;font-size:17px;color:#5a6872;letter-spacing:0.23px">c9b356f1ff4bc</div></div>
<div style="position:absolute;left:546px;top:0;width:144px;height:1055px;overflow:hidden"><div class="a" style="left:17px;top:1034.0px;font-size:17px;color:#5a6872;letter-spacing:0.00px">Chihuahua</div></div>
<div style="position:absolute;left:690px;top:0;width:154px;height:1055px;overflow:hidden"><div class="a" style="left:17px;top:1034.0px;font-size:17px;color:#5a6872;letter-spacing:0.33px">66536ec31dbc707</div></div>
<div style="position:absolute;left:844px;top:0;width:145px;height:1055px;overflow:hidden"><div class="a" style="left:17px;top:1034.0px;font-size:17px;color:#5a6872;letter-spacing:0.27px">6fe6d35ef80d9e1</div></div>
<div style="position:absolute;left:989px;top:0;width:144px;height:1055px;overflow:hidden"><div class="a" style="left:17px;top:1034.0px;font-size:17px;color:#5a6872;letter-spacing:0.38px">60783e873d19a</div></div>
<div style="position:absolute;left:1133px;top:0;width:144px;height:1055px;overflow:hidden"><div class="a" style="left:17px;top:1034.0px;font-size:17px;color:#5a6872;letter-spacing:0.50px">35</div></div>
<div style="position:absolute;left:1277px;top:0;width:175px;height:1055px;overflow:hidden"><div class="a" style="left:17px;top:1034.0px;font-size:17px;color:#5a6872;letter-spacing:0.00px">Married</div></div>
<div style="position:absolute;left:1452px;top:0;width:144px;height:1055px;overflow:hidden"><div class="a" style="left:17px;top:1034.0px;font-size:17px;color:#5a6872;letter-spacing:0.00px">Professional</div></div>
<div style="position:absolute;left:1596px;top:0;width:144px;height:1055px;overflow:hidden"><div class="a" style="left:17px;top:1034.0px;font-size:17px;color:#5a6872;letter-spacing:0.00px">bpautotd@thetimes</div></div>
<div style="position:absolute;left:1740px;top:0;width:200px;height:1055px;overflow:hidden"><div class="a" style="left:17px;top:1034.0px;font-size:17px;color:#5a6872;letter-spacing:0.44px">3737 989538 13720</div></div>
</div></div>
<div style="position:absolute;left:821px;top:437px;width:388px;height:169px;background:#fff;border:1px solid #dfe3e6;box-shadow:0 3px 8px rgba(0,0,0,0.12)"></div>
<svg style="position:absolute;left:840px;top:429px" width="18" height="11" viewBox="0 0 18 11">
<path d="M0.5 9 L8.5 1 L16.5 9" fill="#fff" stroke="#dfe3e6" stroke-width="1"/>
<rect x="1.2" y="8" width="14.6" height="3" fill="#fff"/></svg>
<div class="a " style="left:846.0px;top:465.0px;font-size:14px;font-weight:bold;color:#152935">Column anonymized</div>
<div class="a " style="left:846.0px;top:492.0px;font-size:14.45px;color:#152935">The values and format of data in this column are</div>
<div class="a " style="left:846.0px;top:513.0px;font-size:14.45px;color:#152935">substituted by this policy: <b>Substitute Personal</b></div>
<div class="a " style="left:846.0px;top:534.0px;font-size:14.45px;color:#152935"><b>Information only</b></div>
<div class="a " style="left:846.0px;top:566.0px;font-size:14px;font-weight:bold;color:#3d70b2">Learn more</div>
<div style="position:absolute;left:1824.4px;top:960.6px;width:71.4px;height:71.4px;border-radius:50%;background:#333;box-shadow:0 2px 10px rgba(0,0,0,0.18)"></div>
<svg style="position:absolute;left:1840px;top:975px" width="40" height="44" viewBox="0 0 40 44">
<path d="M6.8 2.9 H34.5 C36 2.9 37.5 4.2 37.5 6 V40.7 L31 36.7 H6.8 C5.1 36.7 3.8 35.4 3.8 33.7 V6 C3.8 4.2 5.1 2.9 6.8 2.9 Z" fill="#fff"/>
<path d="M9.3 26.8 C15 31.5 26 31.5 32.5 26.8" fill="none" stroke="#333" stroke-width="1.7" stroke-linecap="round"/>
</svg>
<div style="position:absolute;left:0;top:0;width:1920px;height:1px;background:#fcfcfc"></div>
<div style="position:absolute;left:0;top:1px;width:1920px;height:1px;background:#8c949a"></div>
<div style="position:absolute;left:0;top:0;width:1px;height:1055px;background:#9c9c9c"></div>
<div style="position:absolute;left:1px;top:0;width:1px;height:1055px;background:rgba(160,160,160,0.55)"></div>
<div style="position:absolute;left:0;top:44px;width:2px;height:60px;background:#1c2e45"></div>
<div style="position:absolute;left:0;top:464px;width:2px;height:96px;background:#1f3d6b"></div>
<div style="position:absolute;left:0;top:1050px;width:3px;height:5px;background:#3a4a48;border-top-right-radius:3px"></div>
<svg style="position:absolute;left:1915px;top:1049px" width="5" height="6" viewBox="0 0 5 6"><path d="M5 0 V6 H0 Q3.5 4 5 0 Z" fill="#3a3a3a"/></svg>
</body></html>
